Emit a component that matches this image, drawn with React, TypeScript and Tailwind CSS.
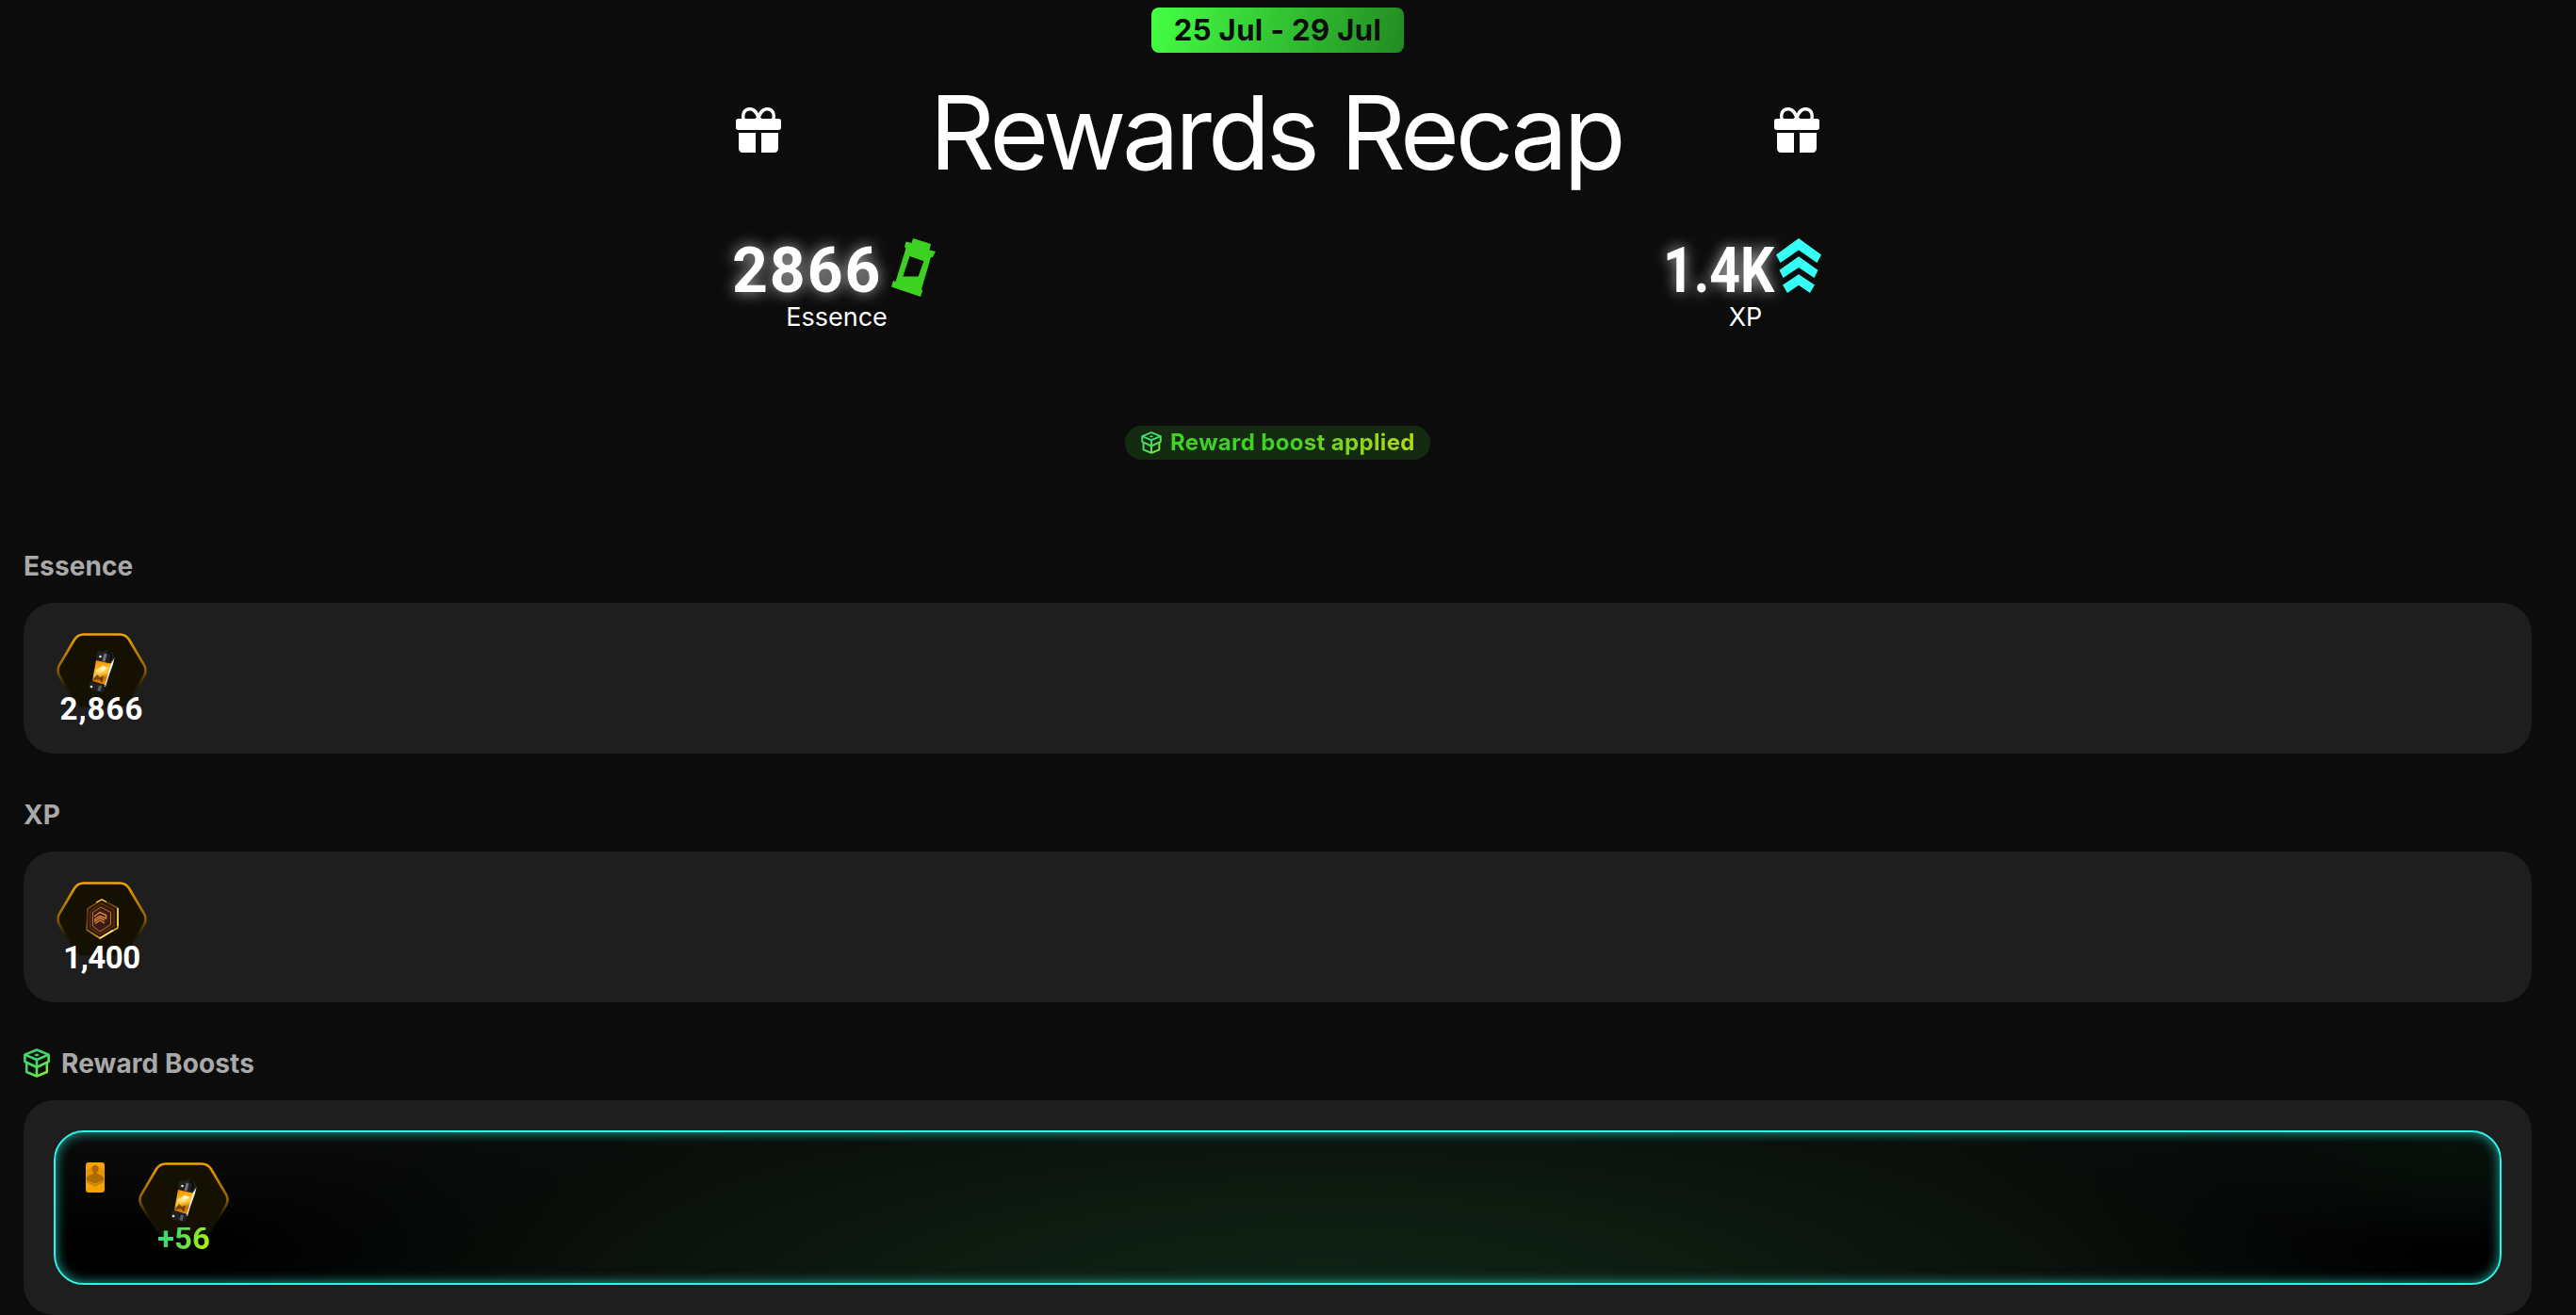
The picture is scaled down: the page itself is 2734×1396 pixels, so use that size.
import { useId } from 'react';
import type { ReactNode } from 'react';

type IconProps = { className?: string };

const GiftIcon = ({ className }: IconProps) => (
    <svg viewBox="0 0 16 16" fill="currentColor" className={className}>
        <path
            fillRule="evenodd"
            d="M2.100 4.200C1.700 1.700 2.800 0 4.800 0C6.400 0 7.400 0.800 8 2.200C8.600 0.800 9.600 0 11.200 0C13.200 0 14.300 1.700 13.900 4.200ZM3.300 4.100H6.600L7.300 3.600C6.800 2.100 5.900 1.200 4.900 1.200C3.500 1.200 2.800 2.600 3.300 4.100ZM12.700 4.100H9.400L8.700 3.600C9.200 2.100 10.100 1.200 11.100 1.200C12.500 1.200 13.200 2.600 12.700 4.100Z"
        />
        <rect x="0" y="4" width="16" height="4" rx="0.9" />
        <path d="M1 9H7V16H2.400A1.400 1.400 0 0 1 1 14.600ZM9 9H15V14.600A1.400 1.400 0 0 1 13.600 16H9Z" />
    </svg>
);

const EssenceIcon = ({ className }: IconProps) => (
    <svg viewBox="0 0 47 62" className={className}>
        <path
            fill="#3dd121"
            fillRule="evenodd"
            d="M23 0L42 6L40.500 12.500L47 14L43.500 20.500L42 20L32 54L33 55.500L31 62L0 51.500L2 45L4.500 46L15.500 10.500L14 9L15.500 3.500L21.500 5ZM19.500 19L12.200 40.500H28.600L34.500 24.300Z"
        />
    </svg>
);

const XpIcon = ({ className }: IconProps) => (
    <svg viewBox="0 0 48 58" fill="#36fff6" className={className}>
        <path d="M24 0L48 17.500L43.500 26L24 12.500L4.500 26L0 17.500Z" />
        <path d="M24 19.300L44.500 33.800L40.500 42L24 31L7.500 42L3.500 33.800Z" />
        <path d="M24 38.300L41 49.500L36 58L24 49.700L12 58L7 49.500Z" />
    </svg>
);

const BoostIcon = ({ className }: IconProps) => {
    const id = useId();
    return (
        <svg viewBox="0 0 28 31" fill="none" className={className}>
            <defs>
                <linearGradient id={id} x1="0" y1="0" x2="28" y2="31" gradientUnits="userSpaceOnUse">
                    <stop offset="0.5" stopColor="#42d86c" />
                    <stop offset="1" stopColor="#a4ee20" />
                </linearGradient>
            </defs>
            <g stroke={`url(#${id})`} strokeWidth="2.600" strokeLinejoin="round">
                <path d="M1.400 6.600L14 1.500L26.600 6.600V14L14 20L1.400 14Z" />
                <path d="M1.400 6.600L14 12L26.600 6.600M14 12V29.500" />
                <path d="M3.200 15V25L14 29.500L24.800 25V15" />
            </g>
            <path d="M11 6.900L14 5.400L17 6.900L14 8.500Z" fill={`url(#${id})`} />
        </svg>
    );
};

const Capsule = () => {
    const id = useId();
    return (
        <g>
            <defs>
                <linearGradient id={id} x1="44" y1="30" x2="50" y2="56" gradientUnits="userSpaceOnUse">
                    <stop offset="0" stopColor="#f79200" />
                    <stop offset="0.300" stopColor="#ffb319" />
                    <stop offset="0.500" stopColor="#ffc53a" />
                    <stop offset="0.700" stopColor="#c46f06" />
                    <stop offset="1" stopColor="#f59a0a" />
                </linearGradient>
            </defs>
            <path d="M58.500 26.500L61.500 26L60 33L55 47L52 57H49.500L57 33Z" fill="#f4f1ea" />
            <path d="M43 20L46 18.500L48 20L54 18L56.500 21L59 20L61.500 26.500L57.500 32.500L42 29Z" fill="#1f2125" />
            <path d="M50.500 21.500L53.500 22.500L51.500 30.500L48.500 30Z" fill="#6d7279" />
            <path d="M54 20L58 23L57 30" fill="none" stroke="#050505" strokeWidth="1.400" />
            <circle cx="46.500" cy="25" r="1.300" fill="#f3e8b8" />
            <path d="M42 29L57.500 32.500L51.500 55L38 51Z" fill={`url(#${id})`} />
            <path d="M41 40L49 34.500L55 37L51 41L44 42.500Z" fill="#ffe47c" />
            <path d="M46 38L50 35.500L53 37L49 39.500Z" fill="#fffbe0" />
            <path d="M38.500 50L43 44L46 47L50 45.500L48.500 53L45 49Z" fill="#5a2c02" opacity="0.750" />
            <path d="M35.500 51L40 52.500L51.500 55L50.500 61.500L46 63L34 59Z" fill="#1f2125" />
            <path d="M45 55.500L48 56L46.500 62L43.500 61Z" fill="#5a5e65" />
            <circle cx="37" cy="57" r="1.300" fill="#f3e8b8" />
        </g>
    );
};

const XpToken = () => {
    const id = useId();
    return (
        <g>
            <defs>
                <linearGradient id={id} x1="34" y1="20" x2="62" y2="60" gradientUnits="userSpaceOnUse">
                    <stop offset="0" stopColor="#b67a10" />
                    <stop offset="0.250" stopColor="#5c3606" />
                    <stop offset="0.600" stopColor="#a86c0c" />
                    <stop offset="1" stopColor="#ffd44a" />
                </linearGradient>
            </defs>
            <path d="M48 19L65 28V49L46 60L32 51L33 29Z" fill="#2a1608" stroke={`url(#${id})`} strokeWidth="1.500" />
            <path d="M47.500 23L61 30V47L46 56L35.500 49L36 31Z" fill="#351b10" stroke="#6b3b0c" strokeWidth="1" />
            <path d="M47 27L57.500 32.500V45.500L46 53L38.500 47V32.500Z" fill="#3a1c14" stroke="#c97a30" strokeWidth="0.900" />
            <path d="M40 37L46 32.500L52.500 35.500V39L46 36.500L41 39.500V42L46 38.500L51 41M41 44.500L46 41L51 44" fill="none" stroke="#d9853a" strokeWidth="1.400" />
            <path d="M65 28V47" stroke="#ffe062" strokeWidth="1.600" />
            <path d="M46 60L60 51.500" stroke="#ffe27a" strokeWidth="1.600" />
            <path d="M42 22L48 19L53 21.500" fill="none" stroke="#ffe062" strokeWidth="1.200" />
        </g>
    );
};

const HexFrame = ({ children }: { children: ReactNode }) => {
    const id = useId();
    return (
        <svg viewBox="0 0 96 80" className="h-20 w-24 shrink-0">
            <defs>
                <linearGradient id={id} x1="0" y1="0" x2="0" y2="80" gradientUnits="userSpaceOnUse">
                    <stop offset="0" stopColor="#f5a300" />
                    <stop offset="0.500" stopColor="#8a5c00" />
                    <stop offset="0.720" stopColor="#2a1c00" stopOpacity="0.600" />
                    <stop offset="0.850" stopColor="#141000" stopOpacity="0" />
                </linearGradient>
            </defs>
            <path
                d="M29 1.500H67Q73.500 1.500 77 7L93 34Q96 40 93 45.500L77 73Q73.500 78.500 67 78.500H29Q22.500 78.500 19 73L3 45.500Q0 40 3 34L19 7Q22.500 1.500 29 1.500Z"
                fill="#151102"
                stroke={`url(#${id})`}
                strokeWidth="2.600"
            />
            {children}
        </svg>
    );
};

const PersonCard = () => {
    const id = useId();
    return (
        <svg viewBox="0 0 20 32" className="h-8 w-5 shrink-0">
            <defs>
                <linearGradient id={id} x1="0" y1="3" x2="0" y2="22" gradientUnits="userSpaceOnUse">
                    <stop offset="0" stopColor="#b95f00" />
                    <stop offset="1" stopColor="#a87200" />
                </linearGradient>
            </defs>
            <rect width="20" height="32" rx="3" fill="#f5a300" />
            <path d="M0.800 8L10 3L19.200 8V21L10 26L0.800 21Z" fill="#d18b00" opacity="0.600" />
            <path d="M1 20.500L10 24.500L19 20.500" fill="none" stroke="#bd7d00" strokeWidth="1" />
            <circle cx="10" cy="6.500" r="3.600" fill={`url(#${id})`} />
            <path d="M8 8H12V12C14.500 13.500 18.500 13.500 19.200 17V19L10 22.500L0.800 19V17C1.500 13.500 5.500 13.500 8 12Z" fill={`url(#${id})`} />
        </svg>
    );
};

const SectionTitle = ({ children }: { children: ReactNode }) => (
    <h2 className="flex h-8 items-center gap-3 pt-px text-[28px] leading-8 font-bold tracking-[0.100px] whitespace-nowrap text-[#a9a9a9]">
        {children}
    </h2>
);

const rewards = [
    { title: 'Essence', amount: '2,866', art: <Capsule />, tracking: 'tracking-[1px]' },
    { title: 'XP', amount: '1,400', art: <XpToken />, tracking: 'tracking-[-0.5px]' },
];

export default function App() {
    return (
        <div className="h-[1396px] w-full overflow-hidden bg-[#0c0c0c] font-['Inter',sans-serif] text-white">
            <main className="flex w-[2712px] flex-col px-[25px] pt-2">
                <header className="flex flex-col items-center">
                    <div className="flex h-12 w-[268px] items-center justify-center rounded-lg bg-linear-[105deg] from-[#44ff44] to-[#228b22] pt-px text-[31px] font-bold tracking-[0.400px] whitespace-nowrap text-[#0c0c0c]">
                        25 Jul - 29 Jul
                    </div>

                    <div className="mt-[17px] flex h-[130px] w-[1150px] items-center justify-between">
                        <GiftIcon className="size-12" />
                        <h1 className="pt-1 pr-1 text-[108px] leading-[125px] font-normal tracking-[-4.300px] whitespace-nowrap">
                            Rewards Recap
                        </h1>
                        <GiftIcon className="size-12" />
                    </div>

                    <div className="mt-12 flex w-[1154px] justify-between">
                        <div className="flex flex-col items-center">
                            <div className="flex h-[69px] items-start">
                                <span className="-ml-0.5 w-[169px] pt-1 font-['Roboto',sans-serif] text-[66px] leading-[66px] font-bold tracking-[2px] text-shadow-[0_0_16px_rgba(255,255,255,0.7)]">
                                    2866
                                </span>
                                <EssenceIcon className="mt-[2px] h-[62px] w-[47px]" />
                            </div>
                            <span className="pt-px pl-1 text-[27px] leading-8">Essence</span>
                        </div>
                        <div className="flex flex-col items-center">
                            <div className="flex h-[69px] items-start">
                                <span className="-ml-[3px] w-[120px] origin-left scale-x-[0.865] pt-1 font-['Roboto',sans-serif] text-[66px] leading-[66px] font-bold whitespace-nowrap text-shadow-[0_0_16px_rgba(255,255,255,0.7)]">
                                    1.4K
                                </span>
                                <XpIcon className="mt-[2px] h-[58px] w-12" />
                            </div>
                            <span className="pt-px pl-1 text-[27px] leading-8">XP</span>
                        </div>
                    </div>

                    <div className="mt-[99px] flex h-9 w-[324px] items-center rounded-full bg-[#142b12] pl-[17px]">
                        <BoostIcon className="h-6 w-[22px]" />
                        <span className="ml-[9px] bg-linear-to-r from-[#3fd124] from-50% to-[#b5d90c] bg-clip-text text-2xl leading-8 font-bold tracking-[0.350px] whitespace-nowrap text-transparent">
                            Reward boost applied
                        </span>
                    </div>
                </header>

                <div className="mt-24 flex flex-col gap-12">
                    {rewards.map((reward) => (
                        <section key={reward.title}>
                            <SectionTitle>{reward.title}</SectionTitle>
                            <div className="mt-6 h-40 rounded-[32px] bg-[#1e1e1e] px-[35px] py-8">
                                <div className="flex w-24 flex-col items-center">
                                    <HexFrame>{reward.art}</HexFrame>
                                    <span className={`-mt-[11px] font-['Roboto',sans-serif] text-[33px] leading-6 font-bold ${reward.tracking}`}>
                                        {reward.amount}
                                    </span>
                                </div>
                            </div>
                        </section>
                    ))}

                    <section>
                        <SectionTitle>
                            <BoostIcon className="h-[31px] w-7" />
                            Reward Boosts
                        </SectionTitle>
                        <div className="mt-6 h-[228px] rounded-[32px] bg-[#1e1e1e] p-8">
                            <div className="flex h-[164px] gap-9 rounded-[32px] border-2 border-[#2ff3e4] bg-black bg-[radial-gradient(ellipse_46%_190%_at_52%_110%,#0f2417_0%,#0d1a10_40%,#0b110c_65%,transparent_100%),radial-gradient(ellipse_10%_70%_at_98%_10%,#07100a_0%,transparent_100%),linear-gradient(180deg,#0a0c0b_0%,#000_75%)] px-8 py-8 shadow-[inset_0_0_12px_1px_rgba(47,243,228,0.6)]">
                                <PersonCard />
                                <div className="flex w-24 flex-col items-center">
                                    <HexFrame>
                                        <Capsule />
                                    </HexFrame>
                                    <span className="-mt-[11px] bg-linear-[110deg] from-[#42d86c] from-30% to-[#b6f500] bg-clip-text font-['Roboto',sans-serif] text-[33px] leading-6 font-bold text-transparent">
                                        +56
                                    </span>
                                </div>
                            </div>
                        </div>
                    </section>
                </div>
            </main>
        </div>
    );
}
